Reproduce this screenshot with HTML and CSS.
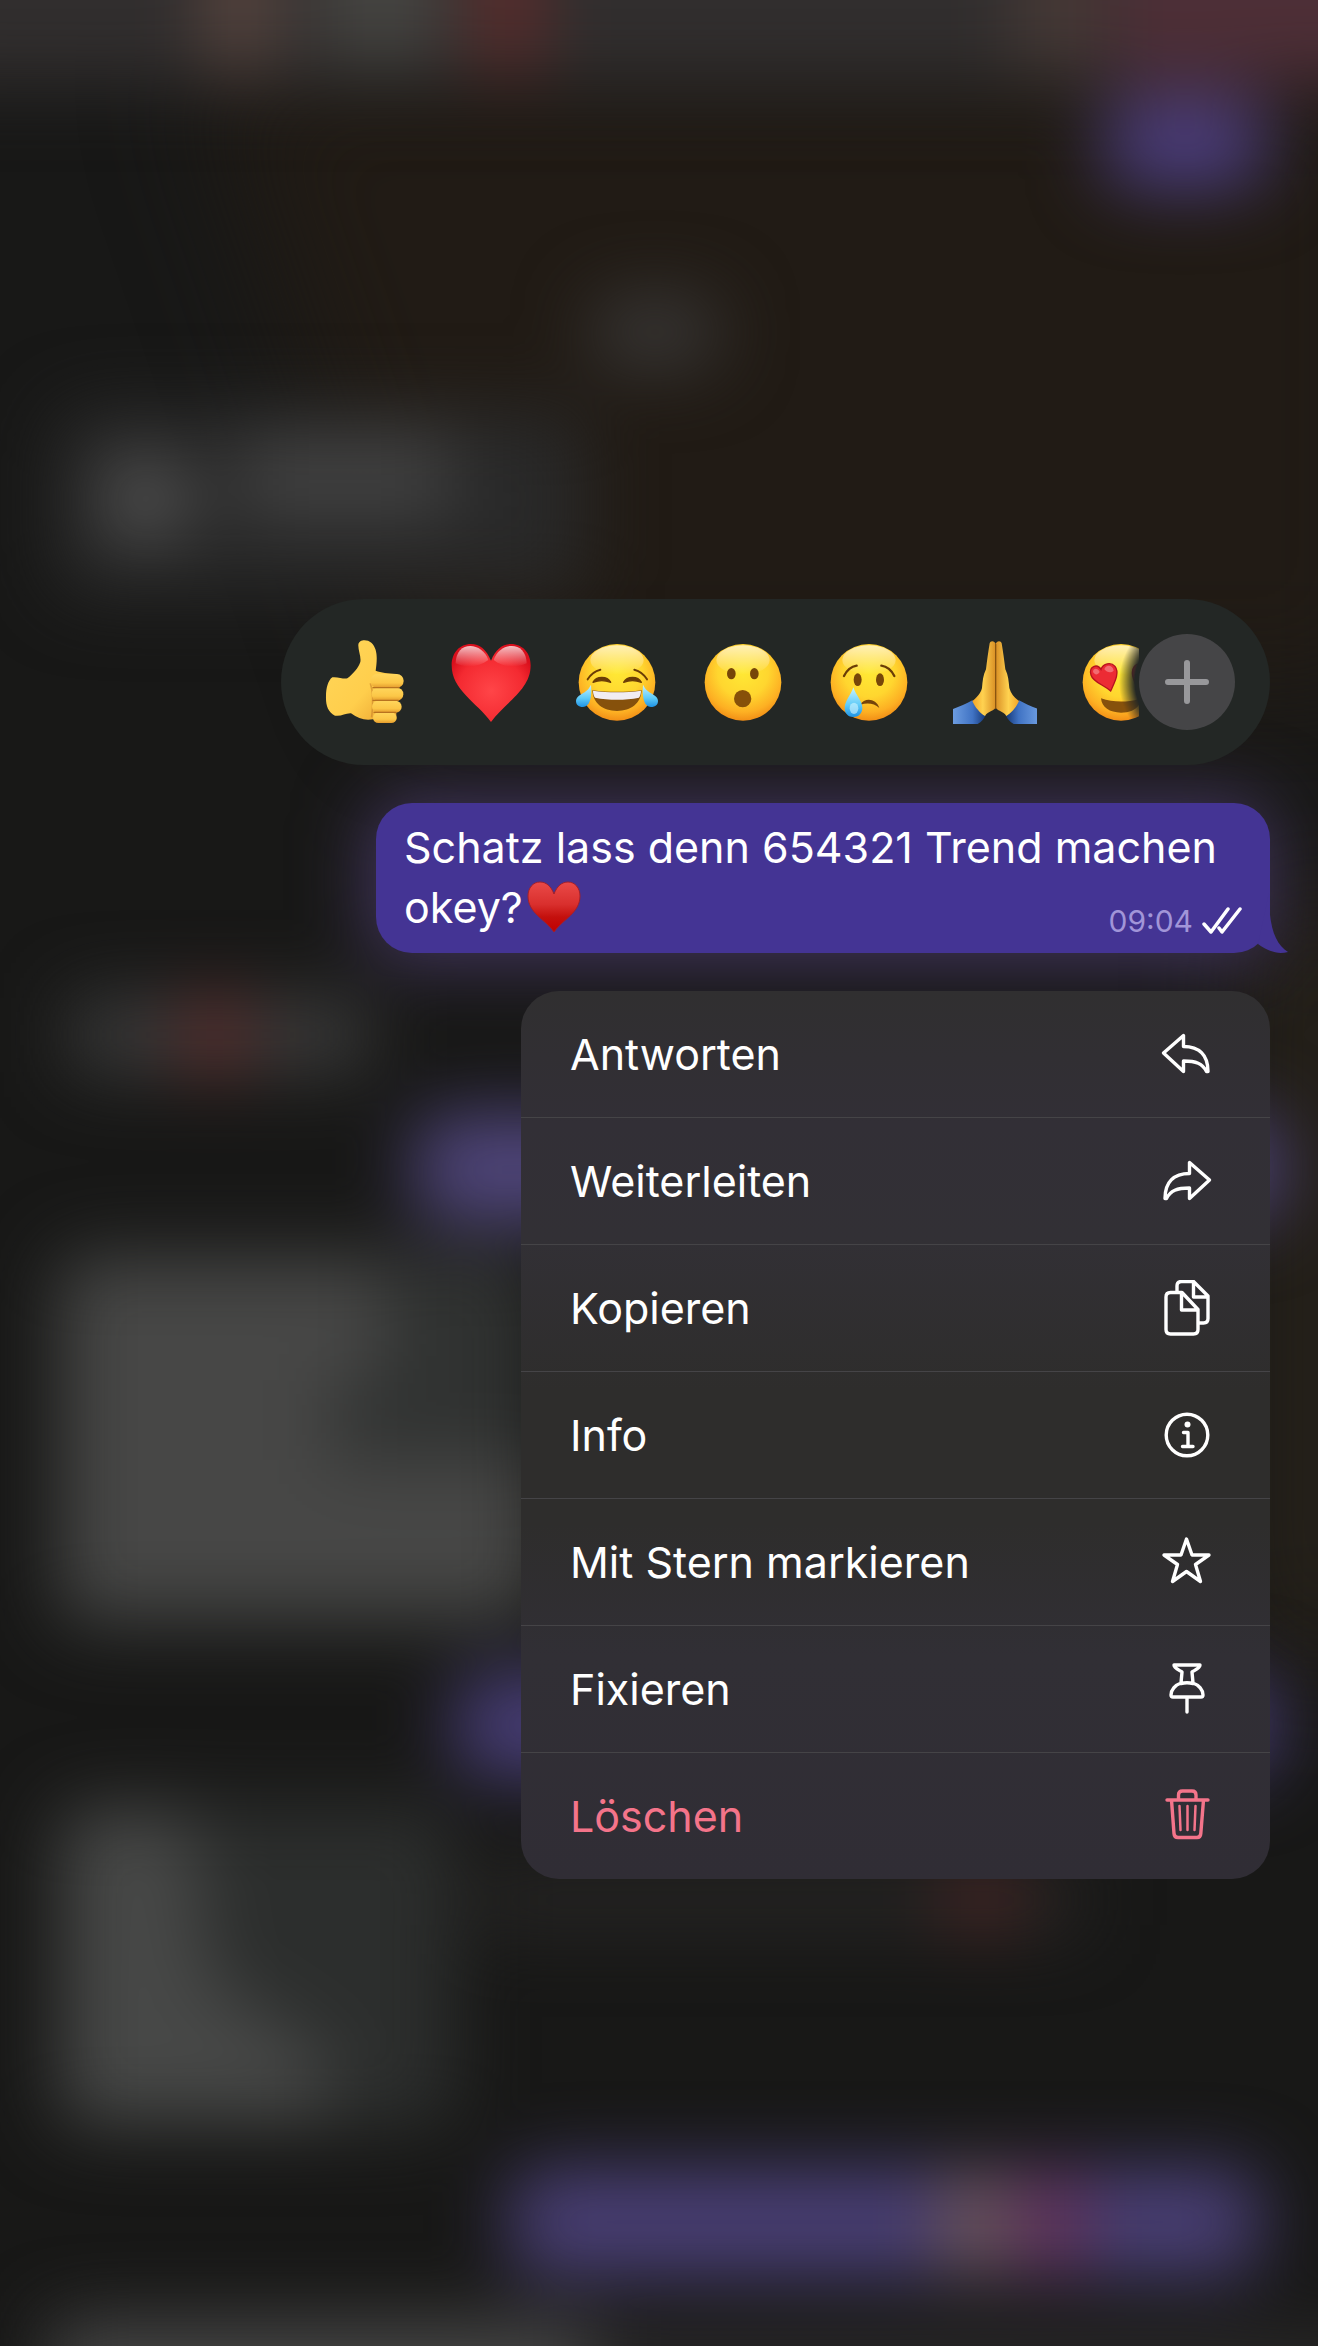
FILE: index.html
```html
<!DOCTYPE html>
<html lang="de">
<head>
	<meta charset="utf-8">
	<meta name="viewport" content="width=device-width, initial-scale=1">
	<title>Chat</title>
	<link rel="stylesheet" href="styles.css">
</head>
<body>
<div class="screen">

	<!-- blurred chat behind the menu -->
	<svg class="backdrop" viewBox="0 0 1318 2346" preserveAspectRatio="none" aria-hidden="true">
		<defs>
			<filter id="blur" filterUnits="userSpaceOnUse" x="-200" y="-200" width="1718" height="2746" color-interpolation-filters="sRGB"><feGaussianBlur stdDeviation="36"/></filter>
			<filter id="haze" filterUnits="userSpaceOnUse" x="-200" y="-200" width="1718" height="2746" color-interpolation-filters="sRGB"><feGaussianBlur stdDeviation="60"/></filter>
		</defs>
		<rect width="1318" height="2346" fill="#181817"/>
		<g filter="url(#haze)">
			<path d="M200 60H1400V700H420Z" fill="#211b15"/>
			<rect x="1262" y="900" width="120" height="760" fill="#29231a"/>
		</g>
		<g filter="url(#blur)">
			<rect x="-80" y="-80" width="1500" height="165" fill="#312e2e"/>
			<rect x="210" y="-80" width="60" height="150" fill="#5e4942"/>
			<rect x="320" y="-80" width="120" height="140" fill="#464542"/>
			<rect x="480" y="-80" width="55" height="150" fill="#662c2b"/>
			<rect x="1020" y="-80" width="70" height="150" fill="#4a3c38"/>
			<rect x="1110" y="-80" width="270" height="165" fill="#4e2f37"/>
			<rect x="1105" y="98" width="160" height="90" rx="30" fill="#4c3e80"/>
			<rect x="590" y="296" width="130" height="72" rx="30" fill="#393736"/>
			<rect x="55" y="410" width="530" height="185" rx="30" fill="#292929"/>
			<circle cx="145" cy="498" r="42" fill="#565656"/>
			<rect x="240" y="435" width="210" height="80" fill="#434343"/>
			<rect x="370" y="800" width="900" height="160" rx="30" fill="#43365f"/>
			<rect x="70" y="997" width="300" height="76" fill="#3a3a3a"/>
			<rect x="185" y="997" width="60" height="76" fill="#622f2e"/>
			<rect x="415" y="1114" width="865" height="108" rx="30" fill="#50467c"/>
			<rect x="55" y="1250" width="480" height="380" rx="30" fill="#303231"/>
			<path d="M65 1265H385V1380H330V1460H540V1610H65Z" fill="#474746"/>
			<rect x="455" y="1674" width="820" height="102" rx="30" fill="#483e78"/>
			<rect x="55" y="1805" width="400" height="325" rx="30" fill="#2c2e2d"/>
			<path d="M65 1810H190L210 1980L330 2060V2120H65Z" fill="#474847"/>
			<rect x="480" y="1870" width="600" height="60" fill="#262524"/>
			<rect x="945" y="1870" width="75" height="56" fill="#502928"/>
			<rect x="510" y="2168" width="750" height="108" rx="30" fill="#493f75"/>
			<rect x="950" y="2180" width="50" height="85" fill="#80604c"/>
			<rect x="1030" y="2180" width="45" height="85" fill="#752a4c"/>
			<rect x="50" y="2320" width="540" height="120" fill="#464646"/>
			<rect x="590" y="2330" width="800" height="100" fill="#282727"/>
		</g>
	</svg>

	<main class="overlay">
		<div class="reactions">
			<div class="emoji-list">
				<button class="emoji" type="button" aria-label="Daumen hoch">
					<svg viewBox="0 0 252 252">
						<defs>
							<linearGradient id="skin" x1="0" y1="0" x2="1" y2="1"><stop offset="0" stop-color="#ffd75a"/><stop offset=".6" stop-color="#ffce4c"/><stop offset="1" stop-color="#e9a02e"/></linearGradient>
							<linearGradient id="finger" x1="0" y1="0" x2="0" y2="1"><stop offset="0" stop-color="#ffd65c"/><stop offset=".65" stop-color="#fcc747"/><stop offset="1" stop-color="#e49b2d"/></linearGradient>
						</defs>
						<path d="M28 112C45 110 62 118 73 115C90 102 106 84 112 66C115 50 105 30 106 14C108-2 132-3 145 8C166 28 162 62 158 92C174 99 196 99 220 102V238H150C125 242 105 236 84 220C67 219 55 230 36 227C14 216 8 195 9 168C9 146 15 121 28 112Z" fill="url(#skin)"/>
						<path d="M142 130C151 155 151 190 146 232" fill="none" stroke="#c9822a" stroke-width="5" opacity=".6"/>
						<rect x="150" y="217" width="71" height="32" rx="16" fill="url(#finger)"/>
						<rect x="147" y="182" width="89" height="36" rx="18" fill="url(#finger)"/>
						<rect x="146" y="143" width="95" height="39" rx="19" fill="url(#finger)"/>
						<rect x="142" y="102" width="100" height="41" rx="20" fill="url(#finger)"/>
						<path d="M150 143H228M150 181H226M153 217H218" stroke="#b8721f" stroke-width="4" stroke-linecap="round" fill="none"/>
					</svg>
				</button>
				<button class="emoji" type="button" aria-label="Herz">
					<svg viewBox="0 0 252 252">
						<defs>
							<radialGradient id="love" cx=".5" cy=".6" r=".6"><stop offset="0" stop-color="#ff4548"/><stop offset=".7" stop-color="#f42a31"/><stop offset="1" stop-color="#d90f1c"/></radialGradient>
							<linearGradient id="shine" x1="0" y1="0" x2="0" y2="1"><stop offset="0" stop-color="#fff" stop-opacity=".75"/><stop offset="1" stop-color="#fff" stop-opacity="0"/></linearGradient>
						</defs>
						<path d="M126 62C112 28 92 12 66 12C32 12 8 38 8 76C8 150 82 186 126 246C170 186 245 150 245 76C245 38 220 12 186 12C160 12 140 28 126 62Z" fill="url(#love)"/>
						<path d="M20 70C20 0 100 4 118 60C90 82 50 85 20 70Z" fill="url(#shine)"/>
						<path d="M134 60C152 4 232 0 233 70C203 85 160 82 134 60Z" fill="url(#shine)"/>
					</svg>
				</button>
				<button class="emoji" type="button" aria-label="Freudentränen">
					<svg viewBox="0 0 252 252">
						<defs>
							<radialGradient id="face" cx=".5" cy=".36" r=".66"><stop offset="0" stop-color="#ffe935"/><stop offset=".5" stop-color="#ffd62f"/><stop offset=".8" stop-color="#fdb023"/><stop offset="1" stop-color="#f08914"/></radialGradient>
							<linearGradient id="gloss" x1="0" y1="0" x2="0" y2="1"><stop offset="0" stop-color="#fff" stop-opacity=".65"/><stop offset="1" stop-color="#fff" stop-opacity="0"/></linearGradient>
							<linearGradient id="tear" x1="0" y1="0" x2="0" y2="1"><stop offset="0" stop-color="#c8f3ff"/><stop offset=".6" stop-color="#5fcbf8"/><stop offset="1" stop-color="#1e92e4"/></linearGradient>
						</defs>
						<circle cx="126" cy="127" r="115" fill="url(#face)"/>
						<ellipse cx="126" cy="60" rx="80" ry="44" fill="url(#gloss)"/>
						<path d="M38 118C47 103 60 93 76 89M216 118C207 103 194 93 178 89" fill="none" stroke="#6b3d06" stroke-width="6" stroke-linecap="round"/>
						<path d="M54 127C64 107 97 107 107 127C91 121 70 121 54 127Z" fill="#6b3d06" stroke="#6b3d06" stroke-width="4" stroke-linejoin="round"/>
						<path d="M146 127C156 107 189 107 199 127C183 121 162 121 146 127Z" fill="#6b3d06" stroke="#6b3d06" stroke-width="4" stroke-linejoin="round"/>
						<path d="M52 151C100 157 152 157 200 151C198 190 168 213 126 213C84 213 54 190 52 151Z" fill="#86510c"/>
						<path d="M54 152C100 158 152 158 198 152C198 162 195 169 192 173C150 181 102 181 60 173C56 167 54 160 54 152Z" fill="#f1edf2"/>
						<path d="M48 134C50 160 50 199 24 201C3 201-2 182 8 171C18 160 38 157 48 134Z" fill="url(#tear)"/>
						<path d="M204 134C202 160 202 199 228 201C249 201 254 182 244 171C234 160 214 157 204 134Z" fill="url(#tear)"/>
					</svg>
				</button>
				<button class="emoji" type="button" aria-label="Erstaunt">
					<svg viewBox="0 0 252 252">
						<circle cx="126" cy="127" r="115" fill="url(#face)"/>
						<ellipse cx="126" cy="60" rx="80" ry="44" fill="url(#gloss)"/>
						<ellipse cx="91" cy="101" rx="13" ry="17" fill="#774608"/>
						<ellipse cx="160" cy="101" rx="13" ry="17" fill="#774608"/>
						<circle cx="125" cy="176" r="26" fill="#875109"/>
					</svg>
				</button>
				<button class="emoji" type="button" aria-label="Traurig">
					<svg viewBox="0 0 252 252">
						<circle cx="126" cy="127" r="115" fill="url(#face)"/>
						<ellipse cx="126" cy="60" rx="80" ry="44" fill="url(#gloss)"/>
						<path d="M51 108C59 92 70 80 89 77M202 108C194 92 183 80 163 77" fill="none" stroke="#6b3d06" stroke-width="7" stroke-linecap="round"/>
						<ellipse cx="92" cy="119" rx="12" ry="19" fill="#774608"/>
						<ellipse cx="159" cy="119" rx="12" ry="19" fill="#774608"/>
						<path d="M100 194C112 172 148 175 157 204C142 190 122 188 100 194Z" fill="#75430a"/>
						<path d="M79 142C87 167 106 183 106 204C106 221 94 231 79 231C64 231 53 221 53 204C53 183 71 167 79 142Z" fill="url(#tear)"/>
						<ellipse cx="81" cy="205" rx="13" ry="17" fill="#d6f7ff" opacity=".6"/>
					</svg>
				</button>
				<button class="emoji" type="button" aria-label="Gefaltete Hände">
					<svg viewBox="0 0 252 252">
						<defs>
							<linearGradient id="sleeve" x1="0" y1="0" x2="1" y2="0"><stop offset="0" stop-color="#6c9ce0"/><stop offset=".6" stop-color="#4073c4"/><stop offset="1" stop-color="#153775"/></linearGradient>
							<linearGradient id="palm" x1="0" y1="0" x2="1" y2="0"><stop offset="0" stop-color="#f3a426"/><stop offset=".45" stop-color="#ffd250"/><stop offset="1" stop-color="#d98f25"/></linearGradient>
						</defs>
						<g id="hand">
							<path d="M58 181C40 191 20 200 0 207V252H74C86 246 92 238 98 226Z" fill="url(#sleeve)"/>
							<path d="M110 10C112 0 126 2 128 12V200C127 213 104 212 96 228C80 218 66 202 58 183C72 172 82 162 87 144C89 124 90 106 99 88C102 62 106 34 110 10Z" fill="url(#palm)"/>
						</g>
						<use href="#hand" transform="matrix(-1 0 0 1 256 0)"/>
						<path d="M128 12V206" stroke="#8a5510" stroke-width="4"/>
					</svg>
				</button>
				<button class="emoji" type="button" aria-label="Verliebt">
					<svg viewBox="0 0 252 252">
						<circle cx="126" cy="127" r="115" fill="url(#face)"/>
						<ellipse cx="126" cy="60" rx="80" ry="44" fill="url(#gloss)"/>
						<g id="eye">
							<path d="M66 88C55 70 28 78 36 105C42 127 74 134 95 153C106 128 123 99 108 79C96 65 72 70 66 88Z" fill="#ec2b34" stroke="#b5121f" stroke-width="4"/>
							<path d="M42 96C42 84 56 82 62 96C56 106 48 106 42 96ZM76 88C80 72 102 74 104 92C96 100 84 98 76 88Z" fill="#fff" opacity=".3"/>
						</g>
						<use href="#eye" transform="matrix(-1 0 0 1 274 0)"/>
						<path d="M66 175C104 188 148 188 186 175C184 202 160 218 126 218C92 218 68 202 66 175Z" fill="#86510c"/>
					</svg>
				</button>
			</div>
			<button class="more" type="button" aria-label="Weitere Reaktionen">
				<svg viewBox="0 0 96 96"><path d="M48 29V67M29 48H67" stroke="#98989b" stroke-width="6" stroke-linecap="round"/></svg>
			</button>
		</div>

		<article class="bubble">
			<p class="message">Schatz lass denn 654321 Trend machen</p>
			<div class="last-line">
				<p class="message">okey?<svg class="heart" viewBox="0 0 54 52" role="img" aria-label="Herz"><defs><linearGradient id="suit" x1="0" y1="0" x2="0" y2="1"><stop offset="0" stop-color="#ea4a48"/><stop offset=".45" stop-color="#d92f2d"/><stop offset=".7" stop-color="#c4100d"/><stop offset="1" stop-color="#c10000"/></linearGradient></defs><path d="M27 13C24 5 19 1 13 1C6 1 1 7 1 15C1 32 18 38 27 51C36 38 53 32 53 15C53 7 48 1 41 1C35 1 30 5 27 13Z" fill="url(#suit)" stroke="#a3202a" stroke-width="1"/></svg></p>
				<div class="meta">
					<time datetime="09:04">09:04</time>
					<svg class="checks" viewBox="0 0 40 28" role="img" aria-label="Zugestellt"><path d="M2 17L9 25L26 2M17 21L20 25L38 2" fill="none" stroke="#fff" stroke-width="3.5" stroke-linecap="round" stroke-linejoin="round"/></svg>
				</div>
			</div>
			<svg class="tail" viewBox="0 0 30 60" aria-hidden="true"><path d="M11 0C11 32 16 50 30 59C18 62 8 57 0 51Z" fill="#443494"/></svg>
		</article>

		<menu class="actions">
			<li><button class="action" type="button">Antworten
				<svg class="icon" viewBox="0 0 56 56"><path id="arrow" d="M4.500 27L24.500 9.500V20.500C40 20.500 49 29 49 45.500H47.500C43.500 37.500 37 35 24.500 35V45.500Z"/></svg>
			</button></li>
			<li><button class="action" type="button">Weiterleiten
				<svg class="icon" viewBox="0 0 56 56"><use href="#arrow" transform="matrix(-1 0 0 1 55 0)"/></svg>
			</button></li>
			<li><button class="action" type="button">Kopieren
				<svg class="icon" viewBox="0 0 56 56"><path d="M39 43H44.500Q49 43 49 38.500V16L34.500 1.500H22.500Q18 1.500 18 6V12.500M34.500 1.500V17H49M11.500 12.500H23L39 29.500V49.500Q39 54 34.500 54H11.500Q7 54 7 49.500V17Q7 12.500 11.500 12.500ZM22.500 12.500V30H39"/></svg>
			</button></li>
			<li><button class="action" type="button">Info
				<svg class="icon" viewBox="0 0 56 56"><circle cx="28" cy="28" r="20.800"/><circle class="dot" cx="28.500" cy="17.500" r="3"/><path d="M24.500 25.500H29V39M23.500 39.500H34"/></svg>
			</button></li>
			<li><button class="action" type="button">Mit Stern markieren
				<svg class="icon" viewBox="0 0 56 56"><path d="M27.500 5L33 21H50L36.500 30.500L41.500 47.500L27.500 37.500L13.500 47.500L18.500 30.500L5 21H22Z"/></svg>
			</button></li>
			<li><button class="action" type="button">Fixieren
				<svg class="icon" viewBox="0 0 56 56"><path d="M15 4H41C41 7 36 9 33 11L34 22C40 24 44 29 44 34Q44 36 42 36H14Q12 36 12 34C12 29 16 24 22 22L23 11C20 9 15 7 15 4ZM22 22.500Q28 21 34 22.500M28 36V51"/></svg>
			</button></li>
			<li><button class="action delete" type="button">Löschen
				<svg class="icon" viewBox="0 0 56 56"><path d="M8 12H49M19.500 12V7Q19.500 3 23.500 3H33Q37 3 37 7V12M12.500 12L15 45.500Q15.300 49.500 19 49.500H38Q41.500 49.500 41.800 45.500L44.500 12"/><path class="thin" d="M20.500 18L21.500 42M28.500 18V42M36.500 18L35.500 42"/></svg>
			</button></li>
		</menu>
	</main>
</div>
</body>
</html>
```
FILE: styles.css
```css
* {
  box-sizing: border-box;
}

body {
  margin: 0;
  background: #181817;
  color: #fff;
  font-family: Inter, "Liberation Sans", sans-serif;
}

.screen {
  position: relative;
  min-height: 100vh;
  overflow: hidden;
}

.backdrop {
  position: absolute;
  top: 0;
  left: 0;
  width: 100%;
  height: 100%;
}

.overlay {
  position: relative;
  display: flex;
  flex-direction: column;
  align-items: flex-end;
  gap: 38px;
  padding: 599px 48px 48px;
}

button {
  margin: 0;
  padding: 0;
  border: none;
  background: none;
  color: inherit;
  font: inherit;
  cursor: pointer;
}

svg {
  display: block;
}

/* reactions */
.reactions {
  display: flex;
  align-items: center;
  width: 100%;
  max-width: 989px;
  height: 166px;
  padding: 0 35px 0 21px;
  border-radius: 83px;
  background: #232725;
}

.emoji-list {
  display: flex;
  flex: 1;
  min-width: 0;
  overflow: hidden;
  -webkit-mask-image: radial-gradient(circle at calc(100% + 48px) 50%, transparent 52px, #000 68px);
  mask-image: radial-gradient(circle at calc(100% + 48px) 50%, transparent 52px, #000 68px);
}

.emoji {
  flex: none;
  width: 126px;
  padding: 0 21px;
}

.more {
  flex: none;
  width: 96px;
  height: 96px;
  border-radius: 50%;
  background: #454547;
}

/* message */
.bubble {
  position: relative;
  width: 100%;
  max-width: 894px;
  padding: 14px 28px 16px;
  border-radius: 36px;
  background: #443494;
}

.message {
  margin: 0;
  font-size: 43px;
  line-height: 60px;
}

.last-line {
  display: flex;
  align-items: flex-end;
  justify-content: space-between;
  height: 60px;
}

.heart {
  display: inline-block;
  width: 54px;
  height: 52px;
  margin-left: 4px;
  vertical-align: -10px;
}

.meta {
  display: flex;
  align-items: center;
  gap: 9px;
  color: #a195d8;
  font-size: 30px;
  line-height: 32px;
}

.checks {
  width: 40px;
  height: 28px;
}

.tail {
  position: absolute;
  right: -18px;
  bottom: 0;
  width: 30px;
  height: 60px;
}

/* actions */
.actions {
  width: 100%;
  max-width: 749px;
  margin: 0;
  padding: 0;
  border-radius: 38px;
  background: linear-gradient(#302f30, #322f36 15%, #323035 28%, #2e2d2c 45%, #2e2d2c 60%, #312f35 75%, #302d35);
  list-style: none;
  overflow: hidden;
}

.actions li + li {
  border-top: 1px solid #454447;
}

.action {
  display: flex;
  align-items: center;
  justify-content: space-between;
  width: 100%;
  height: 126px;
  padding: 0 55px 0 49px;
  font-size: 43px;
  line-height: 60px;
  text-align: left;
}

.action:hover {
  background: rgba(255, 255, 255, 0.06);
}

.icon {
  width: 56px;
  height: 56px;
  fill: none;
  stroke: currentColor;
  stroke-width: 3.4;
  stroke-linecap: round;
  stroke-linejoin: round;
}

.icon .dot {
  fill: currentColor;
  stroke: none;
}

.icon .thin {
  stroke-width: 2.5;
}

.delete {
  color: #f4748a;
}
```
